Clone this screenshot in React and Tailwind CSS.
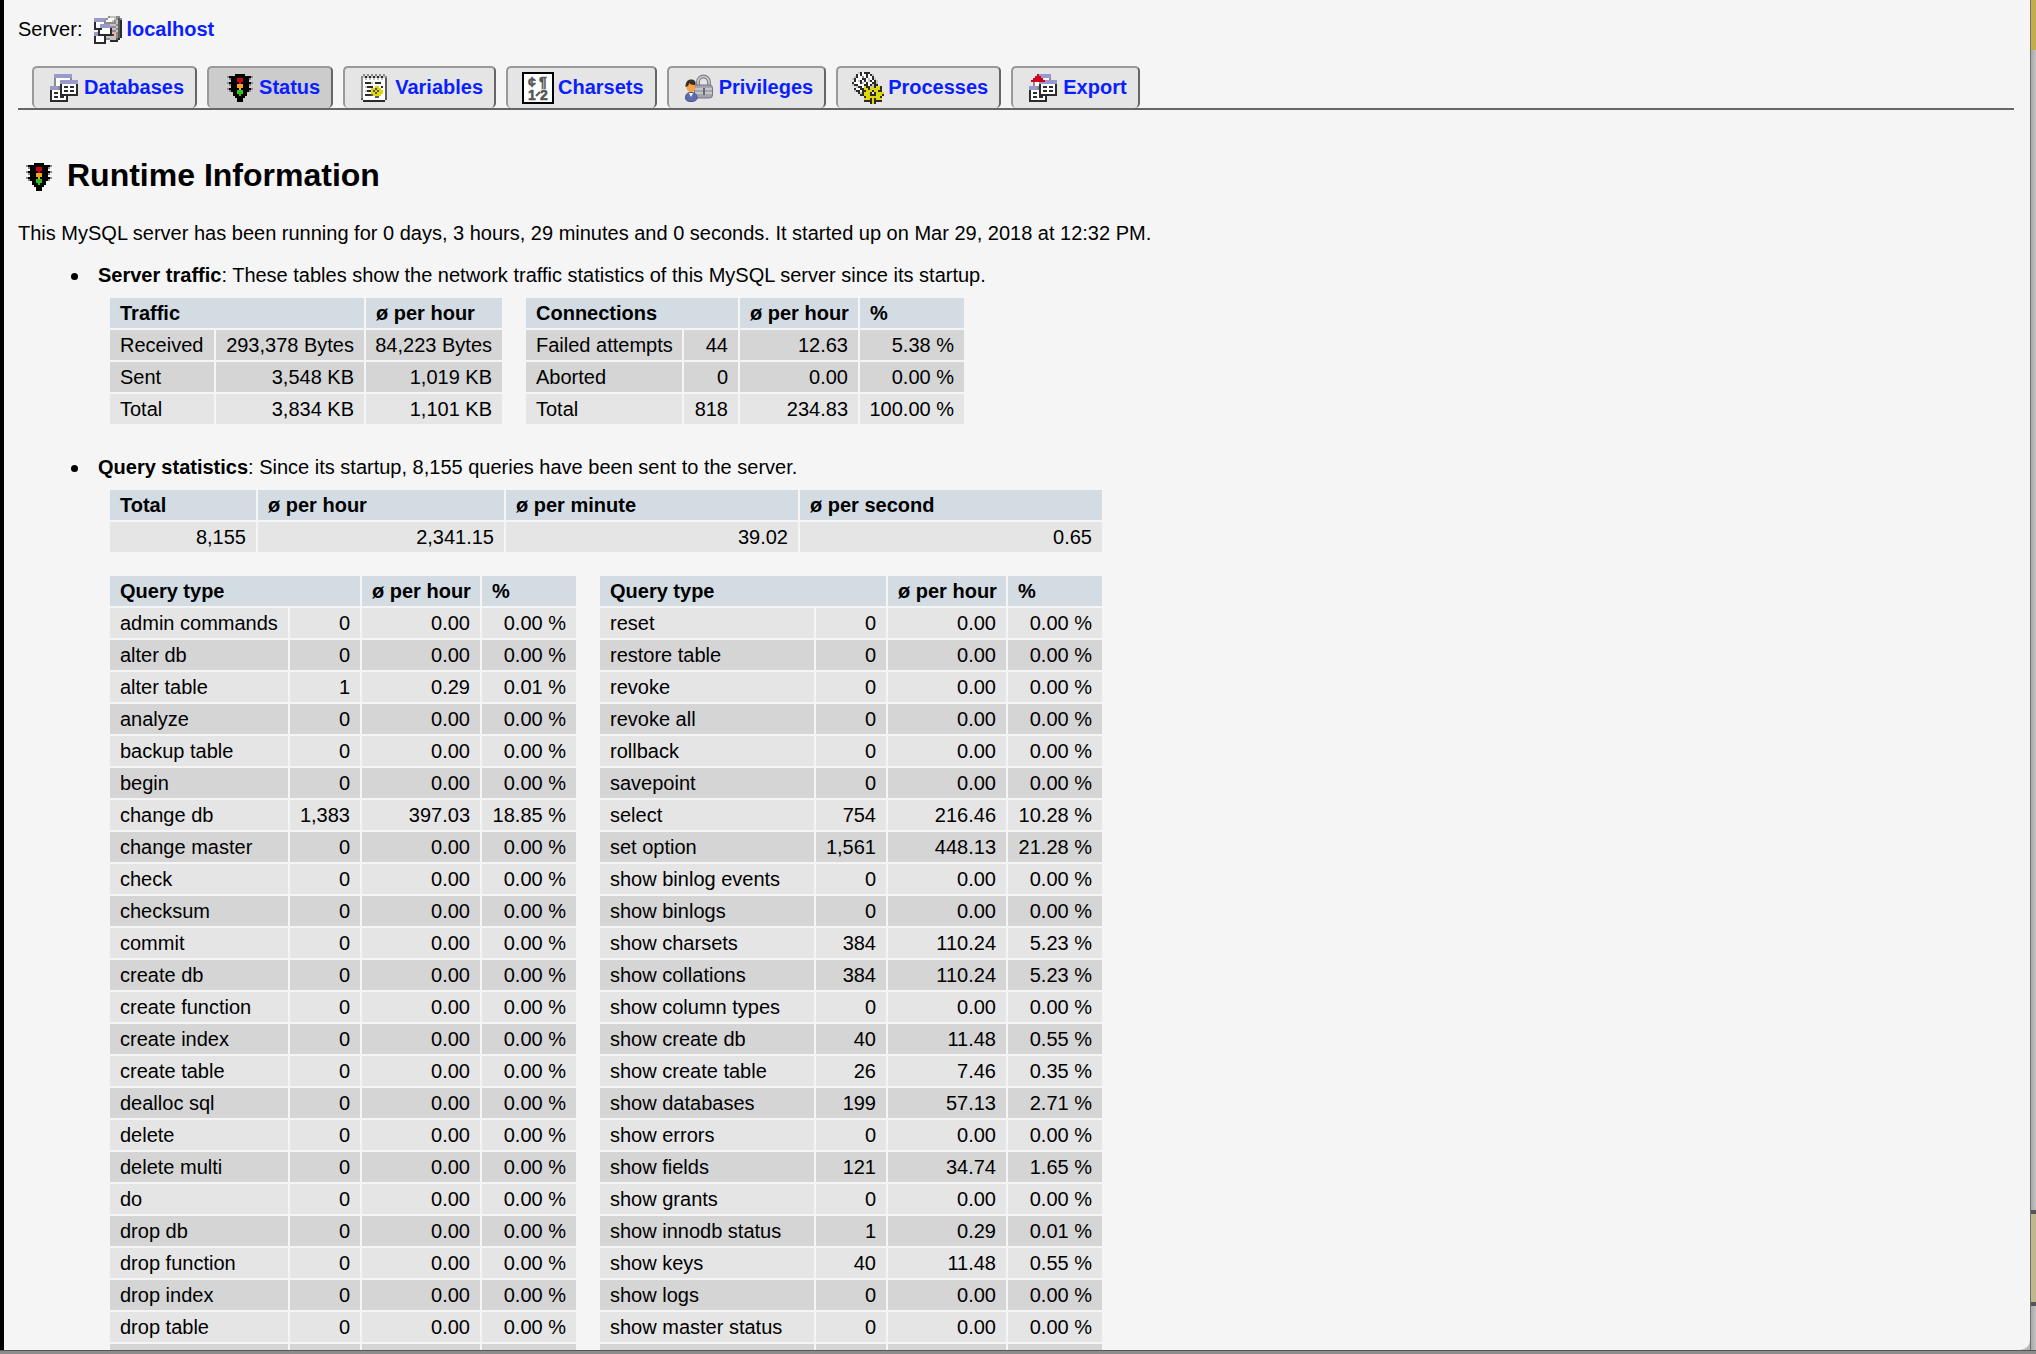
import React from "react";

const PALETTE = {
  K: "#2b2b2b",
  B: "#000000",
  W: "#ffffff",
  L: "#9999cc",
  l: "#c9c9e6",
  G: "#8c8c8c",
  g: "#c4c4c4",
  D: "#5a5a5a",
  R: "#d0021b",
  O: "#f5a623",
  A: "#2ec40f",
  Y: "#e0d610",
};

function PixelIcon({ rows }) {
  const cells = [];
  rows.forEach((row, y) => {
    let x = 0;
    while (x < row.length) {
      const c = row[x];
      let end = x + 1;
      while (end < row.length && row[end] === c) end++;
      if (PALETTE[c]) {
        cells.push(<rect key={`${x}-${y}`} x={x} y={y} width={end - x} height="1" fill={PALETTE[c]} />);
      }
      x = end;
    }
  });
  return (
    <svg viewBox="0 0 16 16" className="size-8 shrink-0" shapeRendering="crispEdges" aria-hidden="true">
      {cells}
    </svg>
  );
}

const SERVER = [
  "................",
  "........GgggGG..",
  ".LLLLLLGWWWgGDG.",
  ".LLLLLGWWWgGgDK.",
  ".KWWWWGGGGGGgDK.",
  ".KWWLLLLLgggGDK.",
  ".KWWLLLLLGGGgDK.",
  ".KKKKWWWWKggGDK.",
  "...KWWWWWKGGgDK.",
  ".LLKWWWWWKggGDK.",
  ".LLKKKKKKKRgGDK.",
  ".KWWWWKgggggGDK.",
  ".KWWWWKGGgggDK..",
  ".KWWWWK..KKKK...",
  ".KKKKKK.........",
  "................",
];

const DATABASES = [
  "................",
  "...LLLLLLLLL....",
  "...LLLLLLLLL....",
  "...GWWWWWWWG....",
  "...GWWLLLLLLLLL.",
  "...GWWLLLLLLLLL.",
  "...GWWKWWWWWWWK.",
  ".LLLLGKWKKWKKWK.",
  ".LLLLGKWWWWWWWK.",
  ".KWWWWKWKKWKKWK.",
  ".KWKKWKWWWWWWWK.",
  ".KWWWWKKKKKKKKK.",
  ".KWKKWKKWK......",
  ".KWWWWWWWK......",
  ".KKKKKKKKK......",
  "................",
];

const STATUS = [
  "................",
  "......BBBBB.....",
  "..GBBBBBBBBBBBG.",
  "...GBBBRRRBBBG..",
  "....BBBRRRBBB...",
  "..GBBBBBRBBBBBG.",
  "...GBBBOOOBBBG..",
  "....BBBOOOBBB...",
  "..GBBBBBOBBBBBG.",
  "...GBBBAAABBBG..",
  ".....BBAAABB....",
  ".....BBBABBB....",
  "......BBBBB.....",
  ".......BBB......",
  ".......BBB......",
  "................",
];

const VARIABLES = [
  "................",
  "..G.G.G.G.G.G...",
  ".GgKgKgKgKgKgG..",
  ".GWgWgWgWgWgWD..",
  ".GWWWWWWWWWWWD..",
  ".GWKKKgWKKKWWD..",
  ".GWWWWWWWWWWWD..",
  ".GWgKKKWYYWKWD..",
  ".GWWWWYYDYYWWD..",
  ".GWgKKYDYDYYWD..",
  ".GWWWWYYDYYYWD..",
  ".GWKKKDYYYYWWD..",
  ".GWWWWWWDDWWWD..",
  ".DWWWWWWWWWWWD..",
  "..KKKKKKKKKKK...",
  "................",
];

const PROCESSES = [
  "...gKWKKK.......",
  "..KWKWWKWKg.....",
  ".gKWWGWKWWK.....",
  "gKWWWKKWgWKg....",
  ".KWgKWKWgKWKg...",
  "KWWWKgWKWWKKg...",
  "gKKWWWKKWKgKK...",
  "..gKKWYKKgYKYYK.",
  ".KWWKKYYKYYYYYK.",
  ".gKKWKKYYYKYYKK.",
  "...KgKYYYK.KYYYY",
  "....KKYYYKKKYYYK",
  "......KYYYYYYYK.",
  "......YYYKYKYYY.",
  "......KKKKYKKKK.",
  ".........KYK....",
];

const EXPORT = [
  "................",
  ".....RLLLLLL....",
  "....RRRLLLLL....",
  "...RRRRRWWWG....",
  "..RRRRRRRLLLLLL.",
  "...GWWLLLLLLLLL.",
  "...GWWKWWWWWWWK.",
  ".LLLLGKWKKWKKWK.",
  ".LLLLGKWWWWWWWK.",
  ".KWWWWKWKKWKKWK.",
  ".KWKKWKWWWWWWWK.",
  ".KWWWWKKKKKKKKK.",
  ".KWKKWKKWK......",
  ".KWWWWWWWK......",
  ".KKKKKKKKK......",
  "................",
];

function CharsetsIcon() {
  return (
    <svg viewBox="0 0 32 32" className="size-8 shrink-0" aria-hidden="true">
      <rect x="1" y="1" width="30" height="30" fill="#fff" stroke="#000" strokeWidth="2" />
      <g fill="#555" stroke="#555" strokeWidth="0.5" fontFamily="Liberation Sans, sans-serif" fontSize="14">
        <text x="6" y="15">¢</text>
        <text x="17" y="15">¶</text>
        <text x="6" y="28">1</text>
        <text x="18" y="28">2</text>
      </g>
      <path d="M14 24l4-4" stroke="#555" strokeWidth="2" />
    </svg>
  );
}

function PrivilegesIcon() {
  return (
    <svg viewBox="0 0 32 32" className="size-8 shrink-0" aria-hidden="true">
      <path d="M15 14V10a5.500 5.500 0 0 1 11 0v4" fill="none" stroke="#85858c" strokeWidth="4" />
      <path d="M15 14V10a5.500 5.500 0 0 1 11 0v4" fill="none" stroke="#c9c9cf" strokeWidth="1.6" />
      <rect x="11.500" y="13" width="18" height="13" rx="3" fill="#a4a4ae" stroke="#77777f" />
      <path d="M12 17h17M12 21h17" stroke="#cfcfd6" strokeWidth="1.4" />
      <rect x="20" y="16" width="2" height="7" fill="#66666e" />
      <path d="M2.500 26c0-4 2-5.500 5.500-5.500s6 1.500 6 5.500c0 2.500-2.500 3.500-6 3.500s-5.500-1-5.500-3.500z" fill="#5d6cae" stroke="#454f86" />
      <path d="M6 21l2 4 2-4z" fill="#fff" />
      <circle cx="8" cy="15.500" r="4.500" fill="#f7a044" />
      <path d="M2.500 15c0-5 2-7.500 5.500-7.500S13 9 12.500 13c-3 0-5-.5-6.500-2 0 2-1 3.500-3.500 4z" fill="#3a3029" />
    </svg>
  );
}

const TABS = [
  { label: "Databases", icon: <PixelIcon rows={DATABASES} /> },
  { label: "Status", icon: <PixelIcon rows={STATUS} />, active: true },
  { label: "Variables", icon: <PixelIcon rows={VARIABLES} /> },
  { label: "Charsets", icon: <CharsetsIcon /> },
  { label: "Privileges", icon: <PrivilegesIcon /> },
  { label: "Processes", icon: <PixelIcon rows={PROCESSES} /> },
  { label: "Export", icon: <PixelIcon rows={EXPORT} /> },
];

const LEFT = [
  ["admin commands", "0", "0.00", "0.00 %"],
  ["alter db", "0", "0.00", "0.00 %"],
  ["alter table", "1", "0.29", "0.01 %"],
  ["analyze", "0", "0.00", "0.00 %"],
  ["backup table", "0", "0.00", "0.00 %"],
  ["begin", "0", "0.00", "0.00 %"],
  ["change db", "1,383", "397.03", "18.85 %"],
  ["change master", "0", "0.00", "0.00 %"],
  ["check", "0", "0.00", "0.00 %"],
  ["checksum", "0", "0.00", "0.00 %"],
  ["commit", "0", "0.00", "0.00 %"],
  ["create db", "0", "0.00", "0.00 %"],
  ["create function", "0", "0.00", "0.00 %"],
  ["create index", "0", "0.00", "0.00 %"],
  ["create table", "0", "0.00", "0.00 %"],
  ["dealloc sql", "0", "0.00", "0.00 %"],
  ["delete", "0", "0.00", "0.00 %"],
  ["delete multi", "0", "0.00", "0.00 %"],
  ["do", "0", "0.00", "0.00 %"],
  ["drop db", "0", "0.00", "0.00 %"],
  ["drop function", "0", "0.00", "0.00 %"],
  ["drop index", "0", "0.00", "0.00 %"],
  ["drop table", "0", "0.00", "0.00 %"],
  ["", "", "", ""],
];

const RIGHT = [
  ["reset", "0", "0.00", "0.00 %"],
  ["restore table", "0", "0.00", "0.00 %"],
  ["revoke", "0", "0.00", "0.00 %"],
  ["revoke all", "0", "0.00", "0.00 %"],
  ["rollback", "0", "0.00", "0.00 %"],
  ["savepoint", "0", "0.00", "0.00 %"],
  ["select", "754", "216.46", "10.28 %"],
  ["set option", "1,561", "448.13", "21.28 %"],
  ["show binlog events", "0", "0.00", "0.00 %"],
  ["show binlogs", "0", "0.00", "0.00 %"],
  ["show charsets", "384", "110.24", "5.23 %"],
  ["show collations", "384", "110.24", "5.23 %"],
  ["show column types", "0", "0.00", "0.00 %"],
  ["show create db", "40", "11.48", "0.55 %"],
  ["show create table", "26", "7.46", "0.35 %"],
  ["show databases", "199", "57.13", "2.71 %"],
  ["show errors", "0", "0.00", "0.00 %"],
  ["show fields", "121", "34.74", "1.65 %"],
  ["show grants", "0", "0.00", "0.00 %"],
  ["show innodb status", "1", "0.29", "0.01 %"],
  ["show keys", "40", "11.48", "0.55 %"],
  ["show logs", "0", "0.00", "0.00 %"],
  ["show master status", "0", "0.00", "0.00 %"],
  ["", "", "", ""],
];

const LIGHT = "bg-[#e5e5e5]";
const DARK = "bg-[#d5d5d5]";

function StatTable({ label, widths, heads, rows, shade, rowHeads = true }) {
  return (
    <table aria-label={label} className="border-separate border-spacing-[2px]">
      <thead>
        <tr className="bg-[#d3dce3] text-left">
          {heads.map(([text, span], i) => (
            <th key={i} scope="col" colSpan={span} className="h-[30px] pl-2.5 leading-[30px] font-bold whitespace-nowrap">
              {text}
            </th>
          ))}
        </tr>
      </thead>
      <tbody>
        {rows.map((row, r) => (
          <tr key={r} className={shade(r)}>
            {row.map((cell, c) =>
              rowHeads && c === 0 ? (
                <th key={c} scope="row" className={`${widths[c]} h-[30px] pl-2.5 text-left leading-[30px] font-normal whitespace-nowrap`}>
                  {cell}
                </th>
              ) : (
                <td key={c} className={`${widths[c]} h-[30px] pr-2.5 text-right leading-[30px] whitespace-nowrap`}>
                  {cell}
                </td>
              )
            )}
          </tr>
        ))}
      </tbody>
    </table>
  );
}

const striped = (r) => (r % 2 === 0 ? LIGHT : DARK);

function Bullet() {
  return <span aria-hidden="true" className="mt-[10px] mr-5 size-[7px] shrink-0 rounded-full bg-black" />;
}

export default function App() {
  return (
    <div className="flex h-screen flex-col overflow-hidden bg-[#b9b9b9] font-['Liberation_Sans',Arial,sans-serif] text-[20px] leading-6 text-black">
      <div className="flex min-h-0 flex-1">
        <div className="w-1 shrink-0 bg-black" />
        <main className="min-w-0 flex-1 overflow-hidden rounded-br-[10px] bg-[#f5f5f5] pt-3.5 pr-4 pl-3.5">
          <div className="flex items-start leading-[30px]">
            <span className="pr-2.5">Server:</span>
            <PixelIcon rows={SERVER} />
            <a href="#server" className="pl-0.5 font-bold text-[#0a1eff]">
              localhost
            </a>
          </div>

          <nav className="mt-5 flex gap-2.5 border-b-2 border-[#666] pl-3.5">
            {TABS.map((tab) => (
              <a
                key={tab.label}
                href={`#${tab.label.toLowerCase()}`}
                aria-current={tab.active ? "page" : undefined}
                className={`flex h-[42px] items-start gap-1 rounded-[5px] border-2 border-b-0 border-t-[#999] border-r-[#666] border-l-[#999] pt-1 pr-[11px] pl-3.5 leading-[30px] font-bold text-[#0a1eff] ${
                  tab.active ? "bg-[#ccc]" : "bg-[#e5e5e5]"
                }`}
              >
                {tab.icon}
                {tab.label}
              </a>
            ))}
          </nav>

          <h2 className="mt-[47px] flex items-end gap-[13px] pl-1 text-[32px] leading-9 font-bold">
            <PixelIcon rows={STATUS} />
            Runtime Information
          </h2>

          <p className="mt-7">
            This MySQL server has been running for 0 days, 3 hours, 29 minutes and 0 seconds. It started up on Mar 29, 2018 at 12:32 PM.
          </p>

          <ul className="mt-[18px] pl-[53px]">
            <li className="flex">
              <Bullet />
              <div>
                <b>Server traffic</b>: These tables show the network traffic statistics of this MySQL server since its startup.
                <div className="mt-[9px] flex gap-5 pl-2.5">
                  <StatTable
                    label="Traffic"
                    widths={["w-[104px]", "w-[148px]", "w-[136px]"]}
                    heads={[["Traffic", 2], ["ø per hour", 1]]}
                    rows={[
                      ["Received", "293,378 Bytes", "84,223 Bytes"],
                      ["Sent", "3,548 KB", "1,019 KB"],
                      ["Total", "3,834 KB", "1,101 KB"],
                    ]}
                    shade={(r) => (r === 2 ? LIGHT : DARK)}
                  />
                  <StatTable
                    label="Connections"
                    widths={["w-[156px]", "w-[54px]", "w-[118px]", "w-[104px]"]}
                    heads={[["Connections", 2], ["ø per hour", 1], ["%", 1]]}
                    rows={[
                      ["Failed attempts", "44", "12.63", "5.38 %"],
                      ["Aborted", "0", "0.00", "0.00 %"],
                      ["Total", "818", "234.83", "100.00 %"],
                    ]}
                    shade={(r) => (r === 2 ? LIGHT : DARK)}
                  />
                </div>
              </div>
            </li>
            <li className="mt-[29px] flex">
              <Bullet />
              <div>
                <b>Query statistics</b>: Since its startup, 8,155 queries have been sent to the server.
                <div className="mt-[9px] flex flex-col items-start gap-5 pl-2.5">
                  <StatTable
                    label="Query totals"
                    rowHeads={false}
                    widths={["w-[146px]", "w-[246px]", "w-[292px]", "w-[302px]"]}
                    heads={[["Total", 1], ["ø per hour", 1], ["ø per minute", 1], ["ø per second", 1]]}
                    rows={[["8,155", "2,341.15", "39.02", "0.65"]]}
                    shade={() => LIGHT}
                  />
                  <div className="flex gap-5">
                    <StatTable
                      label="Query types, first half"
                      widths={["w-[178px]", "w-[70px]", "w-[118px]", "w-[94px]"]}
                      heads={[["Query type", 2], ["ø per hour", 1], ["%", 1]]}
                      rows={LEFT}
                      shade={striped}
                    />
                    <StatTable
                      label="Query types, second half"
                      widths={["w-[214px]", "w-[70px]", "w-[118px]", "w-[94px]"]}
                      heads={[["Query type", 2], ["ø per hour", 1], ["%", 1]]}
                      rows={RIGHT}
                      shade={striped}
                    />
                  </div>
                </div>
              </div>
            </li>
          </ul>
        </main>
        <div className="flex w-1.5 shrink-0 flex-col border-l border-black/40">
          <div className="h-[50px] bg-[#c3ad4e]" />
          <div className="flex-1 bg-linear-to-r from-[#a8a8a8] to-[#c2c2c2]" />
          <div className="h-24 border-y-4 border-[#555] bg-[#c0b78c]" />
          <div className="h-11 bg-linear-to-r from-[#a8a8a8] to-[#c2c2c2]" />
        </div>
      </div>
      <div className="h-1 shrink-0 border-t border-[#555] bg-[#8c8c8c]" />
    </div>
  );
}
